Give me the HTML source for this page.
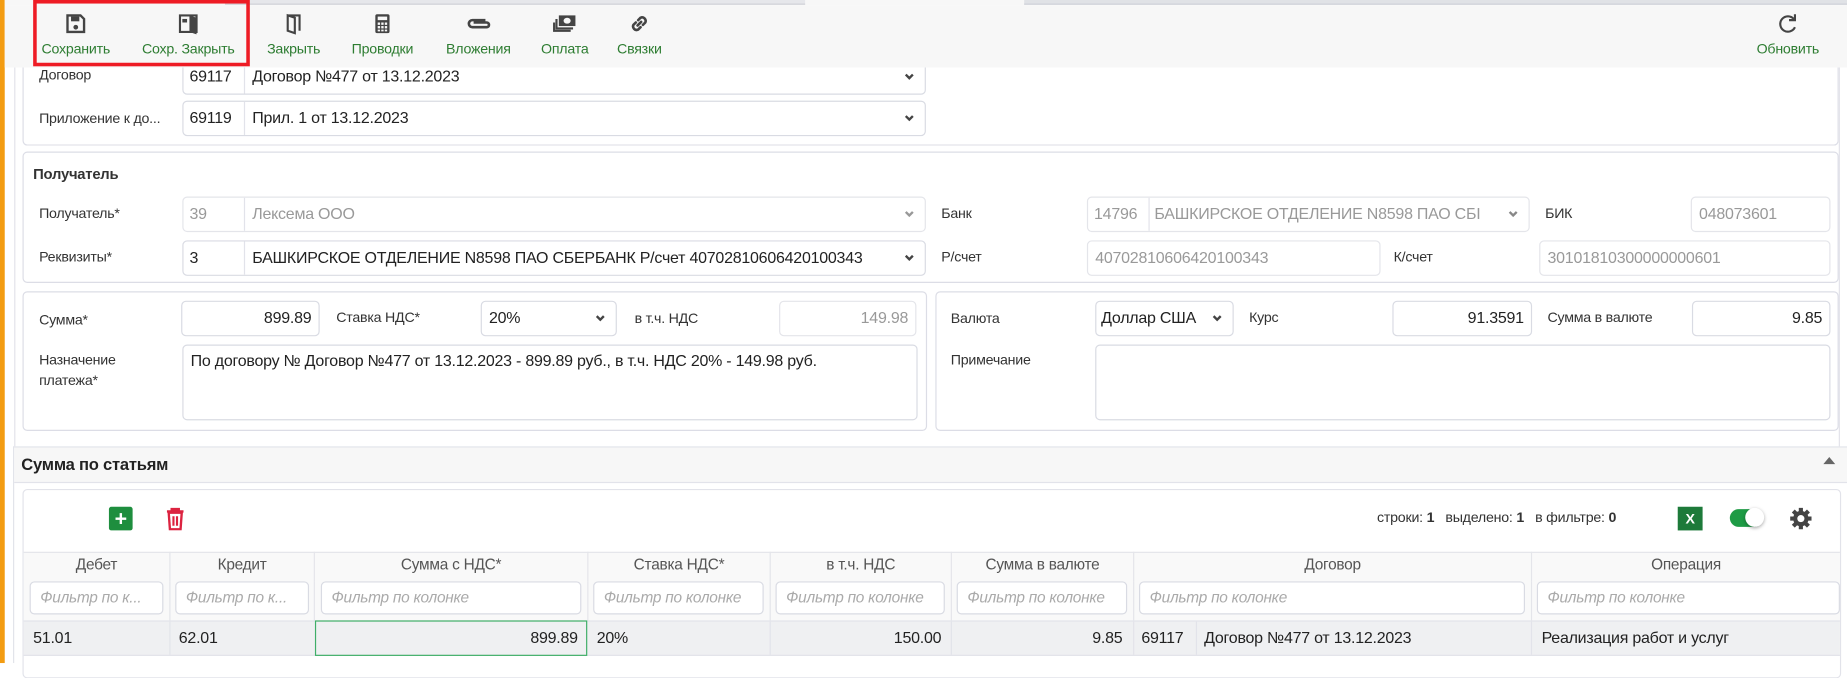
<!DOCTYPE html>
<html><head><meta charset="utf-8">
<style>
*{box-sizing:border-box;margin:0;padding:0}
html,body{width:1847px;height:663px;overflow:hidden;background:#fff}
#w{position:absolute;left:0;top:0;width:1560px;height:560px;transform:scale(1.184);transform-origin:0 0;font-family:"Liberation Sans",sans-serif;color:#333;font-size:12px;letter-spacing:-0.2px}
.a{position:absolute}
.box{position:absolute;border:1px solid #dcdde6;border-radius:4px;background:#fff}
.lbl{position:absolute;font-size:12px;color:#333;white-space:nowrap}
.inp{position:absolute;border:1px solid #d9dbe3;border-radius:4px;background:#fff;height:30px;font-size:13.5px;color:#222;line-height:28px;padding:0 6px;white-space:nowrap;overflow:hidden}
.dis{color:#999}
.code{position:absolute;left:0;top:0;bottom:0;width:52px;border-right:1px solid #e2e3ea;padding:0 5px}
.chev{position:absolute;right:9px;top:10px;width:8px;height:8px}
.tb{position:absolute;top:10px;text-align:center;color:#2e7d32;font-size:12px;white-space:nowrap}
.tb svg{display:block;margin:0 auto 4px}
.th{position:absolute;top:466px;height:25px;line-height:22px;text-align:center;color:#555;font-size:13px;border-left:1px solid #e4e5ea}
.flt{position:absolute;top:491px;height:28px;border:1px solid #d9dbe3;border-radius:4px;background:#fff;color:#aaa;font-style:italic;font-size:13px;line-height:26px;padding-left:8px;white-space:nowrap;overflow:hidden}
.td{position:absolute;top:525px;height:28px;line-height:28px;font-size:13.5px;color:#222;white-space:nowrap}
</style></head><body><div id="w">
<div class="a" style="left:0;top:0;width:4px;height:560px;background:#f39c12"></div>
<div class="a" style="left:4px;top:0;width:1556px;height:5px;background:#f7f7f7"></div>
<div class="a" style="left:190px;top:0;width:490px;height:4px;background:#e6e7eb;border-bottom:1px solid #cfd1d8"></div>
<div class="a" style="left:865px;top:0;width:695px;height:4px;background:#e0e2e6;border-bottom:1px solid #cfd1d8"></div>

<div class="a" style="left:12px;top:57px;width:1px;height:320px;background:#e2e3ea"></div>
<div class="a" style="left:1553px;top:57px;width:1px;height:320px;background:#e2e3ea"></div>

<div class="box" style="left:19px;top:40px;width:1534px;height:83px;border-top:none;border-radius:0 0 4px 4px"></div>
<div class="lbl" style="left:33px;top:56px">Договор</div>
<div class="inp" style="left:154px;top:50px;width:628px;padding-left:58px"><span class="code">69117</span>Договор №477 от 13.12.2023<svg class="chev" viewBox="0 0 8 8"><path d="M1 2l3 3 3-3" fill="none" stroke="#444" stroke-width="2"/></svg></div>
<div class="lbl" style="left:33px;top:93px">Приложение к до...</div>
<div class="inp" style="left:154px;top:85px;width:628px;padding-left:58px"><span class="code">69119</span>Прил. 1 от 13.12.2023<svg class="chev" viewBox="0 0 8 8"><path d="M1 2l3 3 3-3" fill="none" stroke="#444" stroke-width="2"/></svg></div>

<div class="a" style="left:4px;top:5px;width:1556px;height:52px;background:#f7f7f7"></div>
<div class="a" style="left:28px;top:0;width:183px;height:56px;border:3px solid #ee1c25"></div>
<div class="tb" style="left:30px;width:68px"><svg width="20" height="20" viewBox="0 0 20 20"><path d="M3 3h11l3 3v11H3z" fill="none" stroke="#444" stroke-width="2"/><rect x="6" y="4" width="7" height="4" fill="#444"/><circle cx="10" cy="13" r="2" fill="#444"/></svg>Сохранить</div>
<div class="tb" style="left:115px;width:88px"><svg width="20" height="20" viewBox="0 0 20 20"><path d="M3 3h14v14H3z" fill="none" stroke="#444" stroke-width="1.8"/><path d="M11 3l6 2v14l-6-2z" fill="#444"/><rect x="5" y="6" width="4" height="3" fill="#444"/></svg>Сохр. Закрыть</div>
<div class="tb" style="left:220px;width:56px"><svg width="20" height="20" viewBox="0 0 20 20"><path d="M5 3h10v13" fill="none" stroke="#444" stroke-width="1.8"/><path d="M5 3l6 2v13l-6-2z" fill="none" stroke="#444" stroke-width="1.8"/></svg>Закрыть</div>
<div class="tb" style="left:292px;width:62px"><svg width="20" height="20" viewBox="0 0 20 20"><rect x="4" y="2" width="12" height="16" rx="1.5" fill="#444"/><rect x="6" y="4" width="8" height="3" fill="#f7f7f7"/><g fill="#f7f7f7"><rect x="6" y="9" width="2" height="2"/><rect x="9" y="9" width="2" height="2"/><rect x="12" y="9" width="2" height="2"/><rect x="6" y="12" width="2" height="2"/><rect x="9" y="12" width="2" height="2"/><rect x="12" y="12" width="2" height="2"/><rect x="6" y="15" width="2" height="1.5"/><rect x="9" y="15" width="2" height="1.5"/><rect x="12" y="15" width="2" height="1.5"/></g></svg>Проводки</div>
<div class="tb" style="left:372px;width:64px"><svg width="22" height="20" viewBox="0 0 22 20"><path d="M17 7H6a3 3 0 0 0 0 6h12a2 2 0 0 0 0-4H7" fill="none" stroke="#444" stroke-width="2.2"/></svg>Вложения</div>
<div class="tb" style="left:453px;width:48px"><svg width="22" height="20" viewBox="0 0 22 20"><rect x="6" y="3" width="14" height="9" fill="#444"/><ellipse cx="13" cy="7.5" rx="3" ry="2.5" fill="#f7f7f7"/><path d="M4 6v8h14" fill="none" stroke="#444" stroke-width="1.8"/><path d="M2 9v7h14" fill="none" stroke="#444" stroke-width="1.8"/></svg>Оплата</div>
<div class="tb" style="left:517px;width:46px"><svg width="20" height="20" viewBox="0 0 20 20"><path d="M8.5 11.5l3-3M7 9l-2 2a3 3 0 0 0 4 4l2-2M13 11l2-2a3 3 0 0 0-4-4L9 7" fill="none" stroke="#444" stroke-width="2.2" stroke-linecap="round"/></svg>Связки</div>
<div class="tb" style="left:1478px;width:64px"><svg width="20" height="20" viewBox="0 0 20 20"><path d="M15 6A6.5 6.5 0 1 0 16 13" fill="none" stroke="#444" stroke-width="1.8"/><path d="M16 2v5h-5" fill="none" stroke="#444" stroke-width="1.8"/></svg>Обновить</div>

<div class="box" style="left:19px;top:128px;width:1534px;height:111px"></div>
<div class="lbl" style="left:28px;top:140px;font-weight:bold;font-size:12.5px">Получатель</div>
<div class="lbl" style="left:33px;top:173px">Получатель*</div>
<div class="inp dis" style="left:154px;top:166px;width:628px;padding-left:58px;border-color:#e4e5ea"><span class="code">39</span>Лексема ООО<svg class="chev" viewBox="0 0 8 8"><path d="M1 2l3 3 3-3" fill="none" stroke="#999" stroke-width="2"/></svg></div>
<div class="lbl" style="left:795px;top:173px">Банк</div>
<div class="inp dis" style="left:918px;top:166px;width:374px;padding-left:56px;border-color:#e4e5ea"><span class="code">14796</span>БАШКИРСКОЕ ОТДЕЛЕНИЕ N8598 ПАО СБІ<svg class="chev" viewBox="0 0 8 8" style="background:#fff;box-shadow:0 0 0 5px #fff"><path d="M1 2l3 3 3-3" fill="none" stroke="#888" stroke-width="2"/></svg></div>
<div class="lbl" style="left:1305px;top:173px">БИК</div>
<div class="inp dis" style="left:1428px;top:166px;width:118px;border-color:#e4e5ea">048073601</div>
<div class="lbl" style="left:33px;top:210px">Реквизиты*</div>
<div class="inp" style="left:154px;top:203px;width:628px;padding-left:58px"><span class="code">3</span>БАШКИРСКОЕ ОТДЕЛЕНИЕ N8598 ПАО СБЕРБАНК Р/счет 40702810606420100343<svg class="chev" viewBox="0 0 8 8" style="background:#fff;box-shadow:0 0 0 5px #fff"><path d="M1 2l3 3 3-3" fill="none" stroke="#444" stroke-width="2"/></svg></div>
<div class="lbl" style="left:795px;top:210px">Р/счет</div>
<div class="inp dis" style="left:918px;top:203px;width:248px;border-color:#e4e5ea">40702810606420100343</div>
<div class="lbl" style="left:1177px;top:210px">К/счет</div>
<div class="inp dis" style="left:1300px;top:203px;width:246px;border-color:#e4e5ea">30101810300000000601</div>

<div class="box" style="left:19px;top:246px;width:764px;height:118px"></div>
<div class="lbl" style="left:33px;top:263px">Сумма*</div>
<div class="inp" style="left:153px;top:254px;width:117px;text-align:right">899.89</div>
<div class="lbl" style="left:284px;top:261px">Ставка НДС*</div>
<div class="inp" style="left:406px;top:254px;width:115px">20%<svg class="chev" viewBox="0 0 8 8"><path d="M1 2l3 3 3-3" fill="none" stroke="#444" stroke-width="2"/></svg></div>
<div class="lbl" style="left:536px;top:262px">в т.ч. НДС</div>
<div class="inp dis" style="left:658px;top:254px;width:116px;text-align:right;border-color:#e4e5ea">149.98</div>
<div class="lbl" style="left:33px;top:296px;line-height:17px">Назначение<br>платежа*</div>
<div class="inp" style="left:154px;top:291px;width:621px;height:64px;line-height:26px">По договору № Договор №477 от 13.12.2023 - 899.89 руб., в т.ч. НДС 20% - 149.98 руб.</div>

<div class="box" style="left:790px;top:246px;width:763px;height:118px"></div>
<div class="lbl" style="left:803px;top:262px">Валюта</div>
<div class="inp" style="left:925px;top:254px;width:117px;padding-left:4px">Доллар США<svg class="chev" viewBox="0 0 8 8" style="background:#fff;box-shadow:0 0 0 5px #fff"><path d="M1 2l3 3 3-3" fill="none" stroke="#444" stroke-width="2"/></svg></div>
<div class="lbl" style="left:1055px;top:261px">Курс</div>
<div class="inp" style="left:1176px;top:254px;width:118px;text-align:right">91.3591</div>
<div class="lbl" style="left:1307px;top:261px">Сумма в валюте</div>
<div class="inp" style="left:1429px;top:254px;width:117px;text-align:right">9.85</div>
<div class="lbl" style="left:803px;top:297px">Примечание</div>
<div class="inp" style="left:925px;top:291px;width:621px;height:64px"></div>

<div class="a" style="left:11px;top:377px;width:1549px;height:183px;border:1px solid #e2e3ea;border-right:none;border-bottom:none"></div>
<div class="a" style="left:12px;top:378px;width:1548px;height:30px;background:#f7f7f7;border-bottom:1px solid #e2e3ea"></div>
<div class="lbl" style="left:18px;top:384px;font-weight:bold;font-size:14px;color:#222">Сумма по статьям</div>
<div class="a" style="left:1540px;top:386px;width:0;height:0;border-left:5px solid transparent;border-right:5px solid transparent;border-bottom:6px solid #666"></div>

<div class="a" style="left:19px;top:413px;width:1536px;height:160px;border:1px solid #e2e3ea;border-radius:4px;background:#fff"></div>
<div class="a" style="left:92px;top:428px;width:20px;height:20px;background:#1e8e3e;border-radius:2px;color:#fff;text-align:center;line-height:20px;font-size:18px;font-weight:bold">+</div>
<svg class="a" style="left:139px;top:428px" width="18" height="20" viewBox="0 0 18 20"><path d="M2 4h14M6 4V2h6v2" fill="none" stroke="#dc2340" stroke-width="2"/><path d="M3.5 5h11l-1 14h-9z" fill="none" stroke="#dc2340" stroke-width="2"/><path d="M7.5 8v8M10.5 8v8" stroke="#dc2340" stroke-width="1.8"/></svg>
<div class="lbl" style="left:1163px;top:430px;font-size:12px">строки: <b>1</b>&nbsp;&nbsp; выделено: <b>1</b>&nbsp;&nbsp; в фильтре: <b>0</b></div>
<div class="a" style="left:1417px;top:428px;width:21px;height:20px;background:#1d7a3a;color:#fff;font-size:12px;font-weight:bold;text-align:center;line-height:20px">X</div>
<div class="a" style="left:1461px;top:430px;width:28px;height:15px;border-radius:8px;background:#1e9b45"></div>
<div class="a" style="left:1474px;top:429px;width:16px;height:16px;border-radius:50%;background:#fff;box-shadow:0 1px 3px rgba(0,0,0,.35)"></div>
<svg class="a" style="left:1511px;top:428px" width="20" height="20" viewBox="0 0 20 20"><g fill="#444"><circle cx="10" cy="10" r="6.5"/><g stroke="#444" stroke-width="3.5"><path d="M10 1v18M1 10h18M3.6 3.6l12.8 12.8M16.4 3.6L3.6 16.4"/></g></g><circle cx="10" cy="10" r="3" fill="#fff"/></svg>

<div class="a" style="left:20px;top:466px;width:1534px;height:59px;background:#f9f9f9;border-top:1px solid #e4e5ea"></div>
<div class="th" style="left:20px;width:123px;border-left:none">Дебет</div>
<div class="th" style="left:143px;width:122px">Кредит</div>
<div class="th" style="left:265px;width:231px">Сумма с НДС*</div>
<div class="th" style="left:496px;width:154px">Ставка НДС*</div>
<div class="th" style="left:650px;width:153px">в т.ч. НДС</div>
<div class="th" style="left:803px;width:154px">Сумма в валюте</div>
<div class="th" style="left:957px;width:336px">Договор</div>
<div class="th" style="left:1293px;width:261px">Операция</div>
<div class="a" style="left:143px;top:491px;width:1px;height:34px;background:#e4e5ea"></div>
<div class="a" style="left:265px;top:491px;width:1px;height:34px;background:#e4e5ea"></div>
<div class="a" style="left:496px;top:491px;width:1px;height:34px;background:#e4e5ea"></div>
<div class="a" style="left:650px;top:491px;width:1px;height:34px;background:#e4e5ea"></div>
<div class="a" style="left:803px;top:491px;width:1px;height:34px;background:#e4e5ea"></div>
<div class="a" style="left:957px;top:491px;width:1px;height:34px;background:#e4e5ea"></div>
<div class="a" style="left:1293px;top:491px;width:1px;height:34px;background:#e4e5ea"></div>
<div class="flt" style="left:25px;width:113px">Фильтр по к...</div>
<div class="flt" style="left:148px;width:113px">Фильтр по к...</div>
<div class="flt" style="left:271px;width:220px">Фильтр по колонке</div>
<div class="flt" style="left:501px;width:144px">Фильтр по колонке</div>
<div class="flt" style="left:655px;width:143px">Фильтр по колонке</div>
<div class="flt" style="left:808px;width:144px">Фильтр по колонке</div>
<div class="flt" style="left:962px;width:326px">Фильтр по колонке</div>
<div class="flt" style="left:1298px;width:256px">Фильтр по колонке</div>

<div class="a" style="left:20px;top:524px;width:1534px;height:30px;background:#eff0f2;border-top:1px solid #e2e3ea;border-bottom:1px solid #e2e3ea"></div>
<div class="a" style="left:143px;top:525px;width:1px;height:28px;background:#e2e3ea"></div>
<div class="a" style="left:650px;top:525px;width:1px;height:28px;background:#e2e3ea"></div>
<div class="a" style="left:803px;top:525px;width:1px;height:28px;background:#e2e3ea"></div>
<div class="a" style="left:957px;top:525px;width:1px;height:28px;background:#e2e3ea"></div>
<div class="a" style="left:1010px;top:525px;width:1px;height:28px;background:#e2e3ea"></div>
<div class="a" style="left:1293px;top:525px;width:1px;height:28px;background:#e2e3ea"></div>
<div class="a" style="left:266px;top:524px;width:230px;height:30px;border:1px solid #3fae68"></div>
<div class="td" style="left:28px">51.01</div>
<div class="td" style="left:151px">62.01</div>
<div class="td" style="left:270px;width:218px;text-align:right">899.89</div>
<div class="td" style="left:504px">20%</div>
<div class="td" style="left:655px;width:140px;text-align:right">150.00</div>
<div class="td" style="left:808px;width:140px;text-align:right">9.85</div>
<div class="td" style="left:964px">69117</div>
<div class="td" style="left:1017px">Договор №477 от 13.12.2023</div>
<div class="td" style="left:1302px">Реализация работ и услуг</div>
</div></body></html>
